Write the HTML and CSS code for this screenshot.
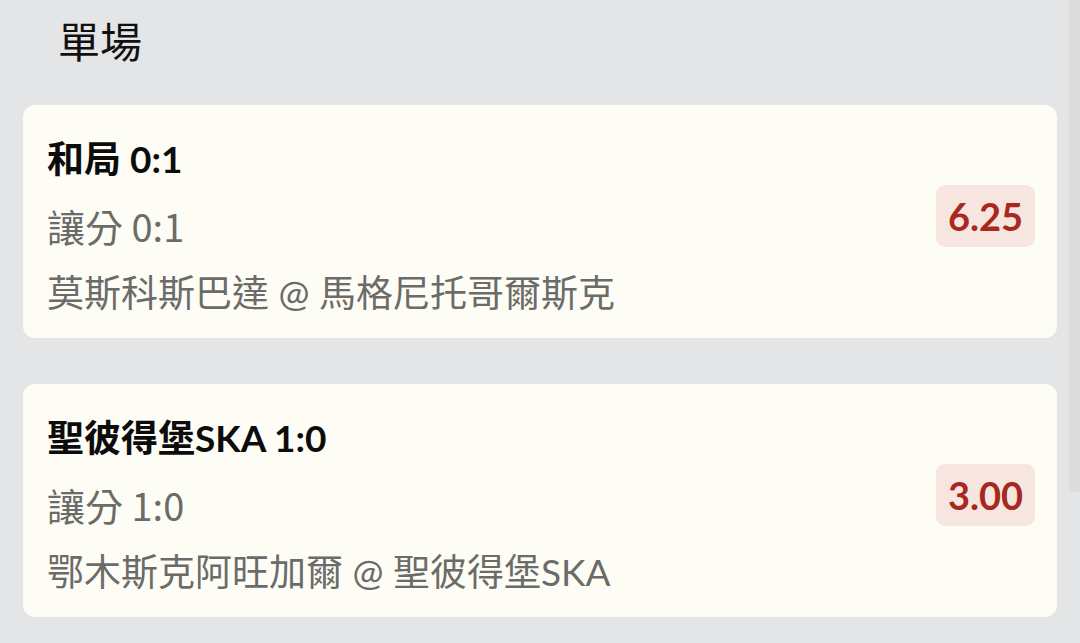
FILE: index.html
```html
<!DOCTYPE html>
<html lang="zh-Hant">
<head>
<meta charset="utf-8">
<link rel="stylesheet" href="styles.css">
</head>
<body>
<div class="page">
  <h1 class="title">單場</h1>
  <div class="list">
    <div class="card">
      <div class="info">
        <div class="pick">和局 0:1</div>
        <div class="market">讓分 0:1</div>
        <div class="match">莫斯科斯巴達 @ 馬格尼托哥爾斯克</div>
      </div>
      <div class="odds">6.25</div>
    </div>
    <div class="card">
      <div class="info">
        <div class="pick">聖彼得堡SKA 1:0</div>
        <div class="market">讓分 1:0</div>
        <div class="match">鄂木斯克阿旺加爾 @ 聖彼得堡SKA</div>
      </div>
      <div class="odds">3.00</div>
    </div>
  </div>
  <div class="scrollbar"></div>
</div>
</body>
</html>
```
FILE: styles.css
```css
html, body {
  margin: 0;
  padding: 0;
}
body {
  background: #e4e5e7;
  font-family: Lato, "Noto Sans CJK TC", sans-serif;
  width: 1080px;
  height: 643px;
  overflow: hidden;
}
.page {
  position: relative;
  height: 643px;
}
.title {
  margin: 0;
  padding: 15px 0 0 58px;
  height: 105px;
  box-sizing: border-box;
  font-size: 42px;
  font-weight: 400;
  line-height: 54px;
  color: #111;
}
.list {
  display: flex;
  flex-direction: column;
  gap: 46px;
  padding: 0 23px;
}
.card {
  background: #fefdf5;
  border-radius: 12px;
  height: 233px;
  box-sizing: border-box;
  padding: 21px 22px 12px 24px;
  display: flex;
  align-items: flex-start;
  justify-content: space-between;
}
.info {
  display: flex;
  flex-direction: column;
}
.pick {
  font-size: 37px;
  font-weight: 700;
  line-height: 66px;
  height: 66px;
  color: #0c0c0c;
}
.market, .match {
  font-size: 37px;
  line-height: 67px;
  height: 67px;
  color: #6b6b69;
}
.market {
  font-family: "Noto Sans CJK TC", sans-serif;
  font-size: 38px;
}
.odds {
  width: 99px;
  height: 62px;
  border-radius: 9px;
  background: #f6e6df;
  color: #a8281f;
  font-size: 38px;
  font-weight: 700;
  line-height: 62px;
  text-align: center;
  margin-top: 59px;
}
.scrollbar {
  position: absolute;
  top: 0;
  right: 0;
  width: 11px;
  height: 492px;
  border-radius: 0 0 4px 4px;
  background: #dcdcdd;
}
```
